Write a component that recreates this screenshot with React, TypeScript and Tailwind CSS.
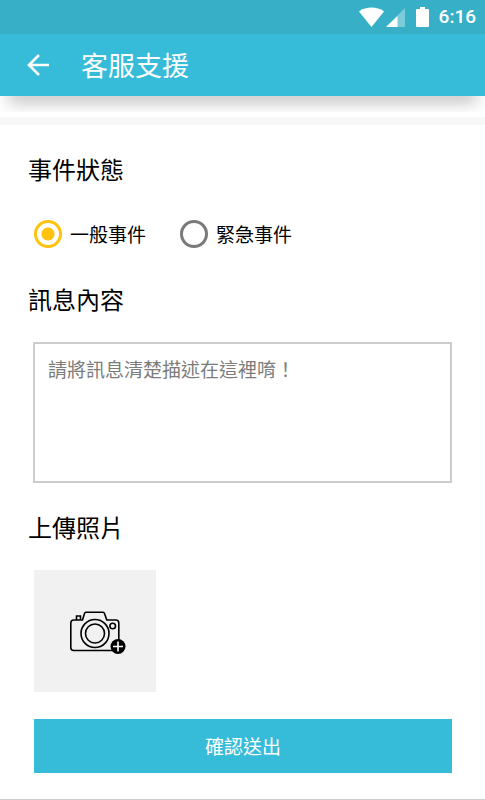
import React, { useState } from "react";

function StatusBar() {
  return (
    <div className="flex h-[34px] items-center justify-end bg-[#37afc6] pr-[9px] text-white">
      <svg width="25" height="20" viewBox="0 0 25 20" fill="currentColor" aria-hidden="true">
        <path d="M0 4.500C3.500 1.500 8 0.500 12.500 0.500s9 1 12.500 4L12.500 20z" />
      </svg>
      <svg className="ml-[2px]" width="19" height="20" viewBox="0 0 19 20" fill="currentColor" aria-hidden="true">
        <path d="M19 1v19H0z" opacity="0.35" />
        <path d="M11.500 8.900V20H0z" />
      </svg>
      <svg className="ml-[11px]" width="13" height="20" viewBox="0 0 13 20" fill="currentColor" aria-hidden="true">
        <path d="M4 0h5v2h3a1 1 0 0 1 1 1v16a1 1 0 0 1-1 1H1a1 1 0 0 1-1-1V3a1 1 0 0 1 1-1h3z" />
      </svg>
      <span className="ml-[10px] font-[Roboto,sans-serif] text-[19px] leading-6 font-medium">6:16</span>
    </div>
  );
}

function AppBar() {
  return (
    <header className="relative flex h-[62px] items-center bg-[#36bbd9] pl-[27px] text-white">
      <button type="button" aria-label="返回" className="flex">
        <svg width="22" height="22" viewBox="0 0 22 22" fill="none" stroke="currentColor" strokeWidth="2.600" aria-hidden="true">
          <path d="M22 11H2M12 1L2 11l10 10" />
        </svg>
      </button>
      <h1 className="ml-8 text-[27px] leading-10">客服支援</h1>
      <div className="absolute inset-x-0 top-full h-4 overflow-hidden">
        <div className="mx-[14px] h-px -translate-y-px shadow-[0_0_16px_6px_rgba(0,0,0,0.28)]" />
      </div>
    </header>
  );
}

function CameraIcon() {
  return (
    <svg width="56" height="44" viewBox="0 0 56 44" fill="none" stroke="#000" strokeWidth="1.600" aria-hidden="true">
      <path d="M12.500 9l2-6.500q.3-1.200 1.500-1.200h17q1.200 0 1.500 1.200l2.300 6.500h9q3 0 3 3v24.500q0 3-3 3h-42q-3 0-3-3V12q0-3 3-3z" strokeLinejoin="round" />
      <path d="M6.500 9V5h4v4" />
      <circle cx="25" cy="22.500" r="14" />
      <circle cx="25" cy="22.500" r="9.500" />
      <circle cx="42.700" cy="15" r="2.800" />
      <circle cx="48" cy="35.500" r="7.500" fill="#000" stroke="none" />
      <path d="M48 30.500v10M43 35.500h10" stroke="#fff" strokeWidth="1.600" />
    </svg>
  );
}

function StatusOption({ value, label, current, onSelect }: {
  value: string;
  label: string;
  current: string;
  onSelect: (value: string) => void;
}) {
  return (
    <label className="flex items-center gap-2 text-[19px] leading-7">
      <input
        type="radio"
        name="status"
        value={value}
        checked={current === value}
        onChange={() => onSelect(value)}
        className="size-7 appearance-none rounded-full border-3 border-[#7a7a7a] checked:border-[#ffc20e] checked:bg-[radial-gradient(circle,#ffc20e_6px,transparent_7px)]"
      />
      {label}
    </label>
  );
}

export default function App() {
  const [status, setStatus] = useState("general");
  return (
    <div className="border-b border-[#cccccc] bg-white font-['Noto_Sans_CJK_TC',sans-serif] text-black">
      <StatusBar />
      <AppBar />
      <div className="mt-[21px] h-2 bg-[#f8f8f8]" />
      <form className="flex flex-col px-7 py-[26px]" onSubmit={(e) => e.preventDefault()}>
        <fieldset>
          <legend className="text-2xl leading-9">事件狀態</legend>
          <div className="mt-[33px] ml-[6px] flex gap-[34px]">
            <StatusOption value="general" label="一般事件" current={status} onSelect={setStatus} />
            <StatusOption value="urgent" label="緊急事件" current={status} onSelect={setStatus} />
          </div>
        </fieldset>

        <label htmlFor="message" className="mt-[33px] text-2xl leading-9">訊息內容</label>
        <textarea
          id="message"
          placeholder="請將訊息清楚描述在這裡唷！"
          className="mx-[5px] mt-[25px] h-[141px] resize-none border-2 border-[#cccccc] px-[13px] py-[11px] text-[19px] leading-7 placeholder:text-[#7c7c7c]"
        />

        <h2 className="mt-[26px] text-2xl leading-9">上傳照片</h2>
        <button type="button" aria-label="上傳照片" className="mt-[25px] ml-[6px] flex size-[122px] items-center justify-center bg-[#f1f1f1] pt-1 pl-[6px]">
          <CameraIcon />
        </button>

        <button type="submit" className="mr-[5px] ml-[6px] mt-[27px] h-[54px] bg-[#36bbd9] text-[19px] leading-7 text-white">
          確認送出
        </button>
      </form>
    </div>
  );
}
